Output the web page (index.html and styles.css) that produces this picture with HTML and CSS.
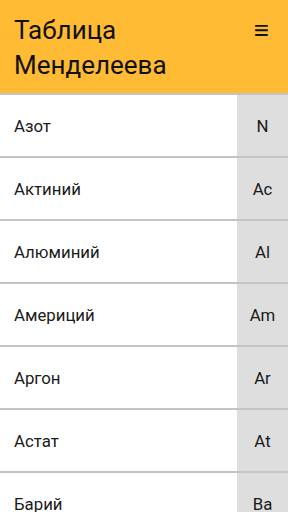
FILE: index.html
```html
<!DOCTYPE html>
<html>
    <head>
        <title>Таблица Менделеева</title>
        <meta charset=utf8>
        <link rel="stylesheet" href="styles.css">
    </head>
    <body>
        <div id="header">
            <h1>Таблица<br>Менделеева</h1>
            <div id="menu">≡</div>
        </div>
        <div id="list">
            <div class="row"><div class="name">Азот</div><div class="symbol">N</div></div>
            <div class="row"><div class="name">Актиний</div><div class="symbol">Ac</div></div>
            <div class="row"><div class="name">Алюминий</div><div class="symbol">Al</div></div>
            <div class="row"><div class="name">Америций</div><div class="symbol">Am</div></div>
            <div class="row"><div class="name">Аргон</div><div class="symbol">Ar</div></div>
            <div class="row"><div class="name">Астат</div><div class="symbol">At</div></div>
            <div class="row"><div class="name">Барий</div><div class="symbol">Ba</div></div>
        </div>
    </body>
</html>
```

FILE: styles.css
```css
html {
    font-family: Roboto, "Noto Sans", sans-serif;
}
body {
    margin: 0;
    padding: 0;
    height: 512px;
    overflow: hidden;
    background-color: white;
}
#header {
    display: flex;
    justify-content: space-between;
    height: 95px;
    box-sizing: border-box;
    padding: 13px 14px 0 14px;
    background-color: #ffbb33;
    border-bottom: 2px solid #c4c4c4;
}
#header h1 {
    margin: 0;
    font-size: 26px;
    font-weight: normal;
    line-height: 35px;
    color: #111;
}
#menu {
    font-size: 26px;
    line-height: 35px;
    color: #111;
    padding-right: 5px;
}
.row {
    display: flex;
    height: 61px;
    border-bottom: 2px solid #c4c4c4;
}
.name {
    flex: 1;
    display: flex;
    align-items: center;
    padding-left: 14px;
    font-size: 16.8px;
    color: #1a1a1a;
}
.symbol {
    width: 51px;
    display: flex;
    align-items: center;
    justify-content: center;
    background-color: #dedede;
    font-size: 16.8px;
    color: #1a1a1a;
}
```
